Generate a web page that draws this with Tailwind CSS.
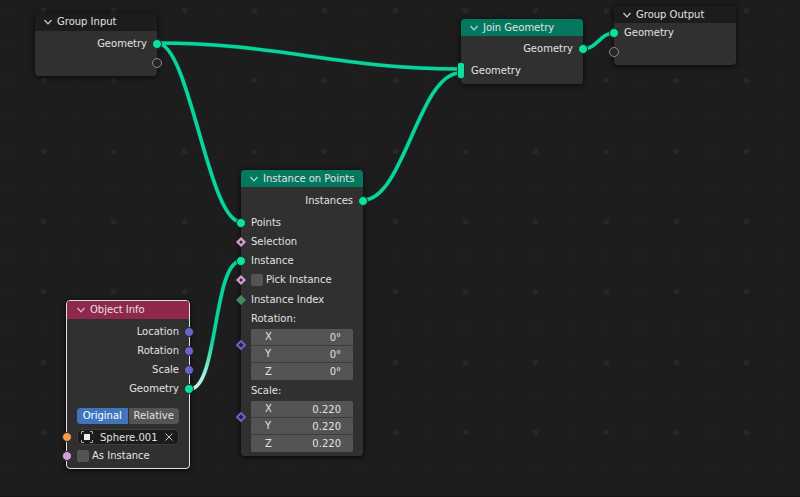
<!DOCTYPE html>
<html lang="en">
<head>
    <meta charset="UTF-8">
    <meta name="viewport" content="width=device-width, initial-scale=1.0">
    <title>Geometry Nodes</title>
    <script src="https://cdn.jsdelivr.net/npm/@tailwindcss/browser@4"></script>
</head>
<body class="bg-[#1d1d1d]">
    <main class="relative h-screen overflow-hidden border-b border-[#141414] font-['DejaVu_Sans',sans-serif] text-[10px] leading-none text-[#e2e2e2]">

        <!-- Grid dots and links -->
        <svg class="absolute inset-0 h-full w-full" aria-hidden="true">
            <defs>
                <pattern id="minorDots" x="41" y="9" width="211" height="211" patternUnits="userSpaceOnUse">
                    <path fill="#1f1f1f" d="M0 0h4v4h-4z M35 0h4v4h-4z M70 0h4v4h-4z M105 0h4v4h-4z M141 0h4v4h-4z M176 0h4v4h-4z M0 35h4v4h-4z M35 35h4v4h-4z M70 35h4v4h-4z M105 35h4v4h-4z M141 35h4v4h-4z M176 35h4v4h-4z M0 70h4v4h-4z M35 70h4v4h-4z M70 70h4v4h-4z M105 70h4v4h-4z M141 70h4v4h-4z M176 70h4v4h-4z M0 105h4v4h-4z M35 105h4v4h-4z M70 105h4v4h-4z M105 105h4v4h-4z M141 105h4v4h-4z M176 105h4v4h-4z M0 141h4v4h-4z M35 141h4v4h-4z M70 141h4v4h-4z M105 141h4v4h-4z M141 141h4v4h-4z M176 141h4v4h-4z M0 176h4v4h-4z M35 176h4v4h-4z M70 176h4v4h-4z M105 176h4v4h-4z M141 176h4v4h-4z M176 176h4v4h-4z"/>
                </pattern>
                <pattern id="majorDots" x="41" y="8" width="211" height="211" patternUnits="userSpaceOnUse">
                    <g fill="#282828">
                        <rect width="5" height="5" rx="1.500"/><rect x="70" width="5" height="5" rx="1.500"/><rect x="141" width="5" height="5" rx="1.500"/>
                        <rect y="70" width="5" height="5" rx="1.500"/><rect x="70" y="70" width="5" height="5" rx="1.500"/><rect x="141" y="70" width="5" height="5" rx="1.500"/>
                        <rect y="141" width="5" height="5" rx="1.500"/><rect x="70" y="141" width="5" height="5" rx="1.500"/><rect x="141" y="141" width="5" height="5" rx="1.500"/>
                    </g>
                </pattern>
                <linearGradient id="selectedLink" gradientUnits="userSpaceOnUse" x1="190" y1="389" x2="210" y2="340">
                    <stop offset="0" stop-color="#e0f7ef"/>
                    <stop offset=".4" stop-color="#9debd5"/>
                    <stop offset="1" stop-color="#0bd49b"/>
                </linearGradient>
            </defs>
            <rect width="100%" height="100%" fill="url(#minorDots)"/>
            <rect width="100%" height="100%" fill="url(#majorDots)"/>
            <g fill="none" stroke="#10332a" stroke-width="5">
                <path d="M157 43C278 43 339 69 460 69"/>
                <path d="M157 43C190 43 208 222 241 222"/>
                <path d="M363 200C404 200 419 73 460 73"/>
                <path d="M190 389C218 389 213 261 241 261"/>
                <path d="M583 49C597 49 600 33 614 33"/>
            </g>
            <g fill="none" stroke="#0bd49b" stroke-width="3.600">
                <path d="M157 43C278 43 339 69 460 69"/>
                <path d="M157 43C190 43 208 222 241 222"/>
                <path d="M363 200C404 200 419 73 460 73"/>
                <path stroke="url(#selectedLink)" d="M190 389C218 389 213 261 241 261"/>
                <path d="M583 49C597 49 600 33 614 33"/>
            </g>
        </svg>

        <!-- Group Input -->
        <section class="absolute left-[35px] top-[13px] w-[122px] rounded bg-[#303030] pb-1 shadow-[0_1px_5px_1px_rgba(0,0,0,0.6)]">
            <header class="flex h-[18px] items-center gap-1 rounded-t bg-[#1c1c1c] pl-2">
                <button type="button" aria-label="Collapse Group Input"><svg class="h-2.5 w-2.5" viewBox="0 0 10 10" fill="none" stroke="#d0d0d0" stroke-width="1.2"><path d="M1.500 3L5 6.800L8.500 3"/></svg></button>
                <h2>Group Input</h2>
            </header>
            <div class="pt-[3px]">
                <div class="relative flex h-[19px] items-center justify-end pr-2.5">Geometry
                    <span class="absolute -right-[5px] h-2.5 w-2.5 rounded-full border border-[#15382d] bg-[#0de09f]"></span>
                </div>
                <div class="relative flex h-[19px] items-center">
                    <span class="absolute -right-[5px] h-2.5 w-2.5 rounded-full border border-[#8a8a8a] bg-[#272727]"></span>
                </div>
            </div>
        </section>

        <!-- Join Geometry -->
        <section class="absolute left-[461px] top-[19px] w-[122px] rounded bg-[#303030] pb-1 shadow-[0_1px_5px_1px_rgba(0,0,0,0.6)]">
            <header class="flex h-[17px] items-center gap-1 rounded-t bg-[#04785f] pl-2">
                <button type="button" aria-label="Collapse Join Geometry"><svg class="h-2.5 w-2.5" viewBox="0 0 10 10" fill="none" stroke="#b5dad1" stroke-width="1.2"><path d="M1.500 3L5 6.800L8.500 3"/></svg></button>
                <h2>Join Geometry</h2>
            </header>
            <div class="pt-[3px]">
                <div class="relative flex h-[19px] items-center justify-end pr-2.5">Geometry
                    <span class="absolute -right-[5px] h-2.5 w-2.5 rounded-full border border-[#15382d] bg-[#0de09f]"></span>
                </div>
                <div class="relative mt-[3px] flex h-[19px] items-center pl-2.5">Geometry
                    <span class="absolute -left-1 h-[17px] w-2 rounded-[3px] border border-[#15382d] bg-[#0de09f]"></span>
                </div>
            </div>
        </section>

        <!-- Group Output -->
        <section class="absolute left-[614px] top-[6px] w-[122px] rounded bg-[#303030] pb-1 shadow-[0_1px_5px_1px_rgba(0,0,0,0.6)]">
            <header class="flex h-[17px] items-center gap-1 rounded-t bg-[#1c1c1c] pl-2">
                <button type="button" aria-label="Collapse Group Output"><svg class="h-2.5 w-2.5" viewBox="0 0 10 10" fill="none" stroke="#d0d0d0" stroke-width="1.2"><path d="M1.500 3L5 6.800L8.500 3"/></svg></button>
                <h2>Group Output</h2>
            </header>
            <div>
                <div class="relative flex h-[19px] items-center pl-2.5">Geometry
                    <span class="absolute -left-[5px] h-2.5 w-2.5 rounded-full border border-[#15382d] bg-[#0de09f]"></span>
                </div>
                <div class="relative flex h-[19px] items-center">
                    <span class="absolute -left-[5px] h-2.5 w-2.5 rounded-full border border-[#8a8a8a] bg-[#272727]"></span>
                </div>
            </div>
        </section>

        <!-- Instance on Points -->
        <section class="absolute left-[241px] top-[170px] w-[122px] rounded bg-[#303030] pb-1 shadow-[0_1px_5px_1px_rgba(0,0,0,0.6)]">
            <header class="flex h-[17px] items-center gap-1 rounded-t bg-[#04785f] pl-2">
                <button type="button" aria-label="Collapse Instance on Points"><svg class="h-2.5 w-2.5" viewBox="0 0 10 10" fill="none" stroke="#b5dad1" stroke-width="1.2"><path d="M1.500 3L5 6.800L8.500 3"/></svg></button>
                <h2>Instance on Points</h2>
            </header>
            <div class="pt-1">
                <div class="relative flex h-[19px] items-center justify-end pr-2.5">Instances
                    <span class="absolute -right-[5px] h-2.5 w-2.5 rounded-full border border-[#15382d] bg-[#0de09f]"></span>
                </div>
                <div class="relative mt-[3px] flex h-[19px] items-center pl-2.5">Points
                    <span class="absolute -left-[5px] h-2.5 w-2.5 rounded-full border border-[#15382d] bg-[#0de09f]"></span>
                </div>
                <div class="relative flex h-[19px] items-center pl-2.5">Selection
                    <svg class="absolute -left-[5px] h-2.5 w-2.5" viewBox="0 0 10 10"><path d="M5 0L10 5L5 10L0 5z" fill="#d1a0d3"/><circle cx="5" cy="5" r="1.5" fill="#29202a"/></svg>
                </div>
                <div class="relative flex h-[19px] items-center pl-2.5">Instance
                    <span class="absolute -left-[5px] h-2.5 w-2.5 rounded-full border border-[#15382d] bg-[#0de09f]"></span>
                </div>
                <div class="relative flex h-5 items-center pl-2.5">
                    <svg class="absolute -left-[5px] h-2.5 w-2.5" viewBox="0 0 10 10"><path d="M5 0L10 5L5 10L0 5z" fill="#d1a0d3"/><circle cx="5" cy="5" r="1.5" fill="#29202a"/></svg>
                    <input type="checkbox" id="pickInstance" class="mr-[3px] h-3 w-3 appearance-none rounded-xs bg-[#545454] checked:bg-[#4772b3]">
                    <label for="pickInstance">Pick Instance</label>
                </div>
                <div class="relative flex h-[19px] items-center pl-2.5">Instance Index
                    <svg class="absolute -left-[5px] h-2.5 w-2.5" viewBox="0 0 10 10"><path d="M5 0L10 5L5 10L0 5z" fill="#458c5c"/></svg>
                </div>
                <div class="flex h-[19px] items-center pl-2.5">Rotation:</div>
                <div class="relative px-2.5 pt-px">
                    <svg class="absolute -left-[5px] top-3 h-2.5 w-2.5" viewBox="0 0 10 10"><path d="M5 1L9 5L5 9L1 5z" fill="#22223a" stroke="#6863c7" stroke-width="2"/></svg>
                    <div class="w-full divide-y divide-[#3c3c3c] overflow-hidden rounded-xs bg-[#545454]">
                        <div class="flex h-[17px] items-center pl-3.5 pr-3"><label for="rotX">X</label><input id="rotX" type="text" value="0°" class="w-full min-w-0 text-right outline-none"></div>
                        <div class="flex h-[17px] items-center pl-3.5 pr-3"><label for="rotY">Y</label><input id="rotY" type="text" value="0°" class="w-full min-w-0 text-right outline-none"></div>
                        <div class="flex h-[17px] items-center pl-3.5 pr-3"><label for="rotZ">Z</label><input id="rotZ" type="text" value="0°" class="w-full min-w-0 text-right outline-none"></div>
                    </div>
                </div>
                <div class="mt-px flex h-[19px] items-center pl-2.5">Scale:</div>
                <div class="relative px-2.5 pt-px">
                    <svg class="absolute -left-[5px] top-3 h-2.5 w-2.5" viewBox="0 0 10 10"><path d="M5 1L9 5L5 9L1 5z" fill="#22223a" stroke="#6863c7" stroke-width="2"/></svg>
                    <div class="w-full divide-y divide-[#3c3c3c] overflow-hidden rounded-xs bg-[#545454]">
                        <div class="flex h-[17px] items-center pl-3.5 pr-3"><label for="scaleX">X</label><input id="scaleX" type="text" value="0.220" class="w-full min-w-0 text-right outline-none"></div>
                        <div class="flex h-[17px] items-center pl-3.5 pr-3"><label for="scaleY">Y</label><input id="scaleY" type="text" value="0.220" class="w-full min-w-0 text-right outline-none"></div>
                        <div class="flex h-[17px] items-center pl-3.5 pr-3"><label for="scaleZ">Z</label><input id="scaleZ" type="text" value="0.220" class="w-full min-w-0 text-right outline-none"></div>
                    </div>
                </div>
            </div>
        </section>

        <!-- Object Info (selected) -->
        <section class="absolute left-[66px] top-[300px] w-[124px] rounded border border-[#dedede] bg-[#303030] pb-[3px] shadow-[0_1px_5px_1px_rgba(0,0,0,0.6)]">
            <header class="flex h-[18px] items-center gap-1 rounded-t-[3px] bg-[#8f284c] pl-[9px]">
                <button type="button" aria-label="Collapse Object Info"><svg class="h-2.5 w-2.5" viewBox="0 0 10 10" fill="none" stroke="#dfbcc8" stroke-width="1.2"><path d="M1.500 3L5 6.800L8.500 3"/></svg></button>
                <h2>Object Info</h2>
            </header>
            <div class="pt-[3px]">
                <div class="relative flex h-[19px] items-center justify-end pr-2.5">Location
                    <span class="absolute -right-[5px] h-2.5 w-2.5 rounded-full border border-[#24243c] bg-[#6863c7]"></span>
                </div>
                <div class="relative flex h-[19px] items-center justify-end pr-2.5">Rotation
                    <span class="absolute -right-[5px] h-2.5 w-2.5 rounded-full border border-[#24243c] bg-[#6863c7]"></span>
                </div>
                <div class="relative flex h-[19px] items-center justify-end pr-2.5">Scale
                    <span class="absolute -right-[5px] h-2.5 w-2.5 rounded-full border border-[#24243c] bg-[#6863c7]"></span>
                </div>
                <div class="relative flex h-[19px] items-center justify-end pr-2.5">Geometry
                    <span class="absolute -right-[5px] h-2.5 w-2.5 rounded-full border border-[#15382d] bg-[#0de09f]"></span>
                </div>
                <div class="mx-2.5 mt-2.5 flex h-4 gap-px overflow-hidden rounded">
                    <button type="button" class="flex-1 bg-[#4075bd] text-white" aria-pressed="true">Original</button>
                    <button type="button" class="flex-1 bg-[#545454]" aria-pressed="false">Relative</button>
                </div>
                <div class="relative mt-[5px] flex items-center px-2.5">
                    <span class="absolute -left-[5px] h-2.5 w-2.5 rounded-full border border-[#3c2a1c] bg-[#f09a55]"></span>
                    <div class="flex h-4 w-full items-center rounded border border-[#3d3d3d] bg-[#1c1c1c] pl-[3px] pr-1">
                        <svg class="h-3 w-3 shrink-0" viewBox="0 0 12 12" aria-hidden="true"><rect x="3" y="3" width="6" height="6" fill="#ececec"/><path d="M.5 3V.5H3M9 .5h2.500V3M11.500 9v2.500H9M3 11.500H.5V9" fill="none" stroke="#a8a8a8"/></svg>
                        <input type="text" aria-label="Object" value="Sphere.001" class="ml-[7px] w-full min-w-0 outline-none">
                        <button type="button" aria-label="Clear object"><svg class="h-2.5 w-2.5" viewBox="0 0 10 10" fill="none" stroke="#c4c4c4"><path d="M1.500 1.500l7 7M8.500 1.500l-7 7"/></svg></button>
                    </div>
                </div>
                <div class="relative mt-px flex h-[19px] items-center pl-2.5">
                    <span class="absolute -left-[5px] h-2.5 w-2.5 rounded-full border border-[#352a36] bg-[#d1a0d3]"></span>
                    <input type="checkbox" id="asInstance" class="mr-[3px] h-3 w-3 appearance-none rounded-xs bg-[#545454] checked:bg-[#4772b3]">
                    <label for="asInstance">As Instance</label>
                </div>
            </div>
        </section>
    </main>
</body>
</html>
